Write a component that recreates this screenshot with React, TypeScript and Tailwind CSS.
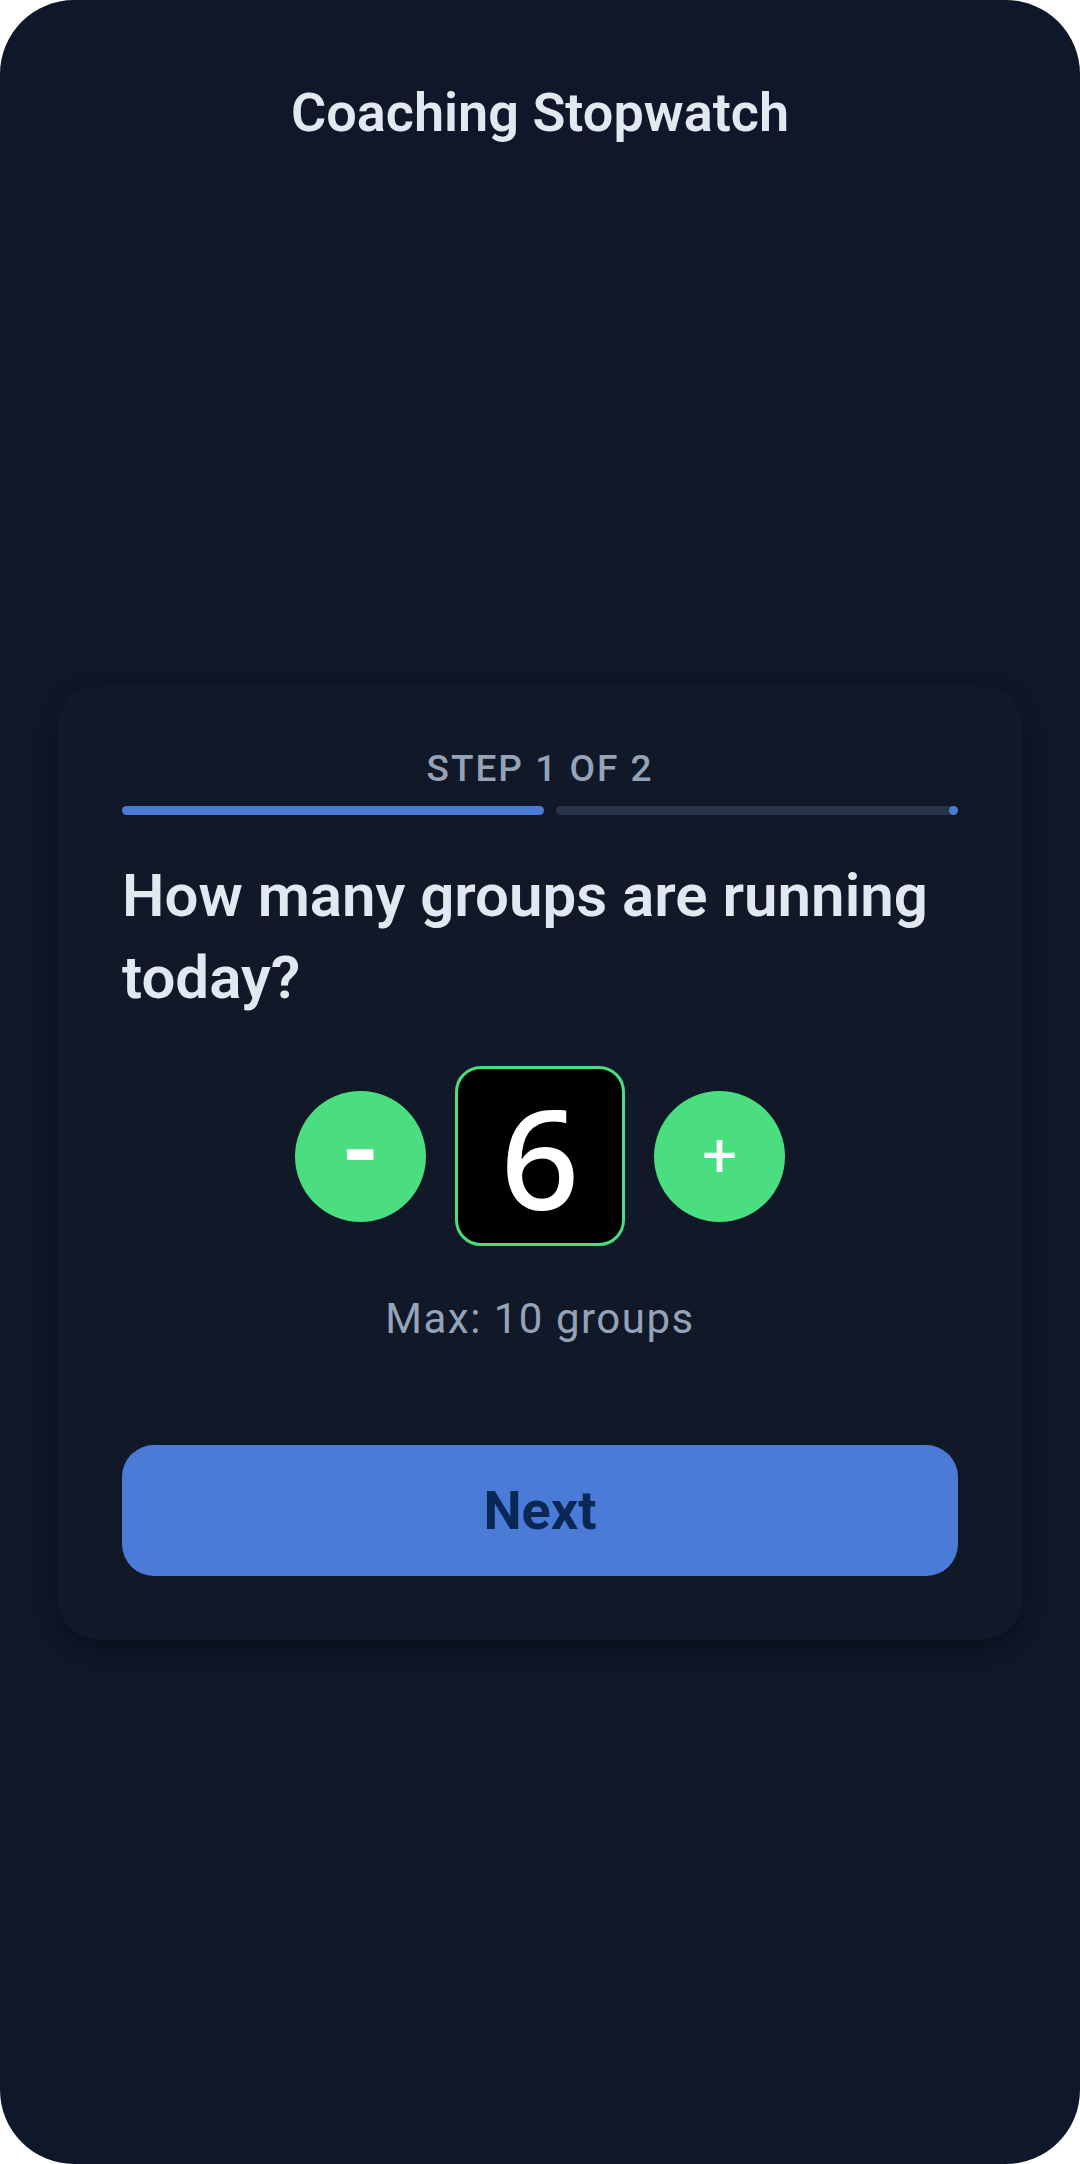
import React, { useState } from "react";

export default function App() {
  const [count, setCount] = useState(6);
  const max = 10;
  return (
    <div className="w-[1080px] h-[2164px] bg-white" style={{ fontFamily: "Roboto, 'Noto Sans', sans-serif" }}>
      <div className="w-full h-full bg-[#0f172a] rounded-[74px] flex flex-col overflow-hidden">
        <header className="h-[161px] pt-[82px] flex justify-center shrink-0">
          <h1 className="text-[54px] leading-[62px] font-semibold text-[#e2e8f0]">Coaching Stopwatch</h1>
        </header>
        <main className="flex-1 flex items-center justify-center">
          <div className="w-[966px] bg-[#111827] rounded-[42px] px-[65px] pt-[59px] pb-[64px] shadow-[0_8px_20px_rgba(0,0,0,0.35)]">
            <p className="text-center text-[37px] leading-[50px] tracking-[2px] font-medium text-[#94a3b8]">STEP 1 OF 2</p>
            <div className="mt-[12px] flex items-center gap-[12px] h-[9px]">
              <div className="h-[9px] w-[422px] rounded-full bg-[#4a7bd6]" />
              <div className="h-[9px] flex-1 rounded-full bg-[#283447] flex justify-end items-center">
                <div className="w-[9px] h-[9px] rounded-full bg-[#4a7bd6]" />
              </div>
            </div>
            <h2 className="mt-[40px] text-[60px] leading-[82px] font-semibold text-[#e2e8f0]">
              How many groups are running today?
            </h2>
            <div className="mt-[47px] flex items-center justify-center gap-[29px]">
              <button
                onClick={() => setCount((c) => Math.max(1, c - 1))}
                className="w-[131px] h-[131px] rounded-full bg-[#4ade80] text-white text-[96px] font-bold leading-none flex items-center justify-center pb-[10px]"
              >
                -
              </button>
              <div className="w-[170px] h-[180px] rounded-[26px] border-[3px] border-[#4ade80] bg-black flex items-center justify-center">
                <span className="text-[138px] leading-none font-medium text-white" style={{ fontFamily: "'Noto Sans', Roboto, sans-serif" }}>{count}</span>
              </div>
              <button
                onClick={() => setCount((c) => Math.min(max, c + 1))}
                className="w-[131px] h-[131px] rounded-full bg-[#4ade80] text-white text-[62px] font-normal leading-none flex items-center justify-center pb-[2px]"
              >
                +
              </button>
            </div>
            <p className="mt-[45px] text-center text-[42px] leading-[56px] text-[#94a3b8] tracking-[1.5px]">Max: {max} groups</p>
            <button className="mt-[98px] w-full h-[131px] rounded-[32px] bg-[#4a7bd6] text-[#0b2756] text-[54px] font-bold">
              Next
            </button>
          </div>
        </main>
      </div>
    </div>
  );
}
